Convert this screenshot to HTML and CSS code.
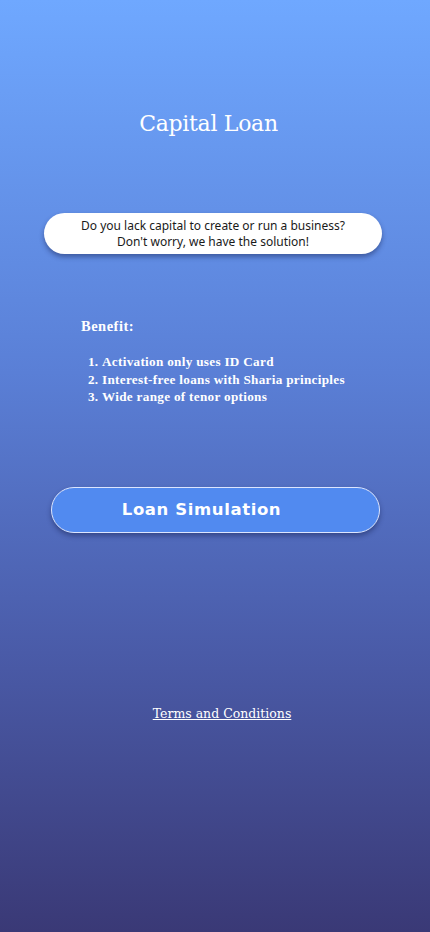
FILE: index.html
```html
<!DOCTYPE html>
<html>
<head>
<meta charset="utf-8">
<link rel="stylesheet" href="styles.css">
</head>
<body>
<main class="screen">
  <h1 class="title">Capital Loan</h1>
  <div class="card">
    <p>Do you lack capital to create or run a business?</p>
    <p>Don't worry, we have the solution!</p>
  </div>
  <section class="benefit">
    <h2>Benefit:</h2>
    <ol>
      <li>Activation only uses ID Card</li>
      <li>Interest-free loans with Sharia principles</li>
      <li>Wide range of tenor options</li>
    </ol>
  </section>
  <button class="sim">Loan Simulation</button>
  <a class="terms" href="#">Terms and Conditions</a>
</main>
</body>
</html>
```
FILE: styles.css
```css
* { box-sizing: border-box; }
html, body { margin: 0; padding: 0; }
body { width: 430px; height: 932px; overflow: hidden; }
.screen {
  height: 932px;
  background: linear-gradient(180deg, #6fa8ff 0%, #5a7fd6 40%, #4a5ba8 70%, #3a3976 100%);
  display: flex;
  flex-direction: column;
  align-items: center;
  color: #fff;
}
.title {
  margin: 108px 0 0 -13px;
  font-family: "DejaVu Serif", serif;
  font-weight: normal;
  font-size: 22px;
  line-height: 32px;
  letter-spacing: -0.3px;
}
.card {
  margin-top: 73px;
  margin-left: -4px;
  width: 338px;
  height: 41px;
  background: #fff;
  border-radius: 21px;
  box-shadow: 0 3px 5px rgba(20, 30, 80, 0.45);
  color: #1a1a1a;
  font-family: "Noto Sans", sans-serif;
  font-size: 12px;
  line-height: 16px;
  padding-top: 1px;
  text-align: center;
  display: flex;
  flex-direction: column;
  justify-content: center;
}
.card p { margin: 0; }
.benefit {
  align-self: flex-start;
  margin: 63px 0 0 81px;
  font-family: "Liberation Serif", serif;
  font-weight: bold;
}
.benefit h2 {
  margin: 0;
  font-size: 14.5px;
  letter-spacing: 0.5px;
  line-height: 18px;
}
.benefit ol {
  margin: 18px 0 0 0;
  padding-left: 21px;
  font-size: 13.2px;
  letter-spacing: 0.3px;
  line-height: 17.5px;
}
.sim {
  margin-top: 81px;
  width: 329px;
  height: 46px;
  margin-left: 1px;
  border: 1px solid #dce6ff;
  border-radius: 23px;
  background: #518af0;
  box-shadow: 0 3px 5px rgba(20, 30, 80, 0.45);
  color: #fff;
  font-family: "DejaVu Sans", sans-serif;
  font-weight: bold;
  font-size: 16.5px;
  letter-spacing: 0.6px;
  padding: 0 28px 0 0;
}
.terms {
  margin-top: 172px;
  margin-left: 14px;
  color: #fff;
  font-family: "DejaVu Serif", serif;
  font-size: 12.5px;
  line-height: 18px;
  text-decoration: underline;
}
```
